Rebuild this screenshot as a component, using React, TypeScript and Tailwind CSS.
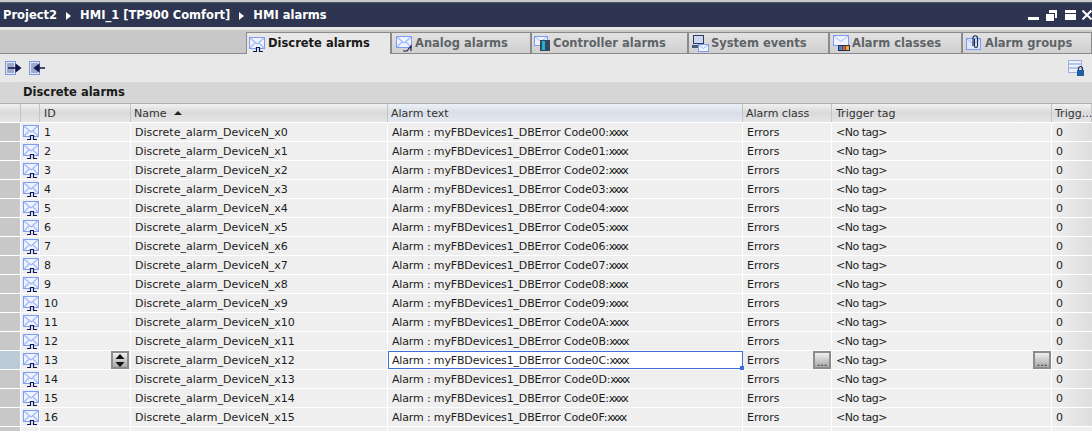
const hex = "0123456789ABCDEF";

const rows = Array.from({ length: 16 }, (_, i) => ({
  id: i + 1,
  name: `Discrete_alarm_DeviceN_x${i}`,
  text: `Alarm : myFBDevices1_DBError Code0${hex[i]}:`,
}));

const Envelope = ({ mark }: { mark?: "pulse" | "ramp" }) => (
  <svg width="17" height="18" viewBox="0 -2 17 18" className="shrink-0">
    <rect x="0.5" y="0.5" width="15" height="11" fill="#eef3ff" stroke="#7b9bf5" />
    <path d="M1 1l7 6 7-6M1 11l5-5M15 11l-5-5" fill="none" stroke="#a3b9f8" strokeWidth="1.300" />
    {mark === "ramp" ? (
      <path d="M7 15h4l4-5v5" fill="none" stroke="#1a1f50" strokeWidth="1.200" />
    ) : (
      <path d="M4 14.500h3.500v-4h3v4H14" fill="#eef3ff" stroke="#10184f" strokeWidth="1.200" />
    )}
  </svg>
);

const ControllerIcon = () => (
  <svg width="17" height="16" viewBox="0 0 17 16" className="shrink-0">
    <rect x="0.5" y="1.5" width="13" height="9" fill="#eef3ff" stroke="#7b9bf5" />
    <path d="M1 2l6 4.500L13 2" fill="none" stroke="#a3b9f8" />
    <rect x="6" y="5" width="10" height="11" fill="#3a4660" />
    <rect x="8" y="6" width="3" height="9" fill="#1fb5c8" />
  </svg>
);

const SystemIcon = () => (
  <svg width="17" height="17" viewBox="0 0 17 17" className="shrink-0">
    <rect x="1.5" y="0.5" width="10" height="8" fill="#cfd8f0" stroke="#2e3a60" />
    <rect x="0" y="10" width="7" height="3" fill="#4a5878" />
    <rect x="6.5" y="9.5" width="10" height="7" fill="#eef3ff" stroke="#7b9bf5" />
    <path d="M7 10l4.500 3.500L16 10" fill="none" stroke="#a3b9f8" />
  </svg>
);

const ClassIcon = () => (
  <svg width="17" height="16" viewBox="0 0 17 16" className="shrink-0">
    <rect x="0.5" y="0.5" width="15" height="10" fill="#eef3ff" stroke="#7b9bf5" />
    <path d="M1 1l7 5.500L15 1" fill="none" stroke="#a3b9f8" />
    <rect x="5" y="10" width="12" height="6" fill="#27304f" />
    <rect x="6" y="11" width="3" height="4" fill="#3f7fe0" />
    <rect x="9.500" y="11" width="3" height="4" fill="#e05a3a" />
    <rect x="13" y="11" width="3" height="4" fill="#e8b030" />
  </svg>
);

const GroupIcon = () => (
  <svg width="17" height="16" viewBox="0 0 17 16" className="shrink-0">
    <rect x="0.5" y="3.500" width="14" height="11" fill="#dfe7fb" stroke="#7b9bf5" />
    <path d="M1 4l6.500 5L14 4" fill="none" stroke="#a3b9f8" />
    <path d="M7 11V3a2.200 2.200 0 0 1 4.500 0v8a1.500 1.500 0 0 1-3 0V4" fill="none" stroke="#1c2450" strokeWidth="1.100" />
  </svg>
);

const tabs = [
  { label: "Discrete alarms", icon: <Envelope />, w: "w-[145px] pl-[2px]", active: true },
  { label: "Analog alarms", icon: <Envelope mark="ramp" />, w: "w-[140px] pl-[4px]" },
  { label: "Controller alarms", icon: <ControllerIcon />, w: "w-[157px] pl-[2px]" },
  { label: "System events", icon: <SystemIcon />, w: "w-[141px] pl-[3px]" },
  { label: "Alarm classes", icon: <ClassIcon />, w: "w-[133px] pl-[3px]" },
  { label: "Alarm groups", icon: <GroupIcon />, w: "w-[130px] pl-[3px]" },
];

const DocArrow = ({ flip }: { flip?: boolean }) => (
  <svg width="17" height="15" viewBox="0 0 17 15">
    <rect x="0.500" y="0.500" width="10" height="13" fill="#dfe7fb" stroke="#7f97d8" />
    <path d="M2 3h7M2 5h7M2 7h7M2 9h7M2 11h7" stroke="#5a6a90" />
    {flip ? (
      <path d="M16 7H8M10 3.500L5.500 7 10 10.500z" fill="#10184f" stroke="#10184f" strokeWidth="1.300" />
    ) : (
      <path d="M3 7h8M11 3.500L15.500 7 11 10.500z" fill="#10184f" stroke="#10184f" strokeWidth="1.300" />
    )}
  </svg>
);

const LockIcon = () => (
  <svg width="16" height="16" viewBox="0 0 16 16">
    <rect x="0.500" y="0.500" width="13" height="12" fill="#eef2fc" stroke="#9aaee0" />
    <path d="M1 4h12M1 8h12" stroke="#7f97d8" />
    <rect x="9" y="10" width="7" height="6" fill="#1f5fa8" />
    <path d="M10.500 10V8.500a2 2 0 0 1 4 0V10" fill="none" stroke="#27304f" strokeWidth="1.200" />
  </svg>
);

const WindowButtons = () => (
  <div className="flex items-center">
    <span className="mt-[7px] h-[3px] w-[11px] bg-white" />
    <svg width="11" height="11" viewBox="0 0 11 11" className="ml-[7px]">
      <path d="M3 0h8v8H9V3H3z M0 4h8v7H0z" fill="#fff" />
    </svg>
    <svg width="11" height="10" viewBox="0 0 11 10" className="ml-[8px]">
      <path d="M0 0h11v3H0z M0 4h11v6H0z" fill="#fff" />
    </svg>
    <svg width="10" height="10" viewBox="0 0 10 10" className="ml-[6px]">
      <path d="M0.500 0.500l9 9M9.500 0.500l-9 9" stroke="#fff" strokeWidth="2" />
    </svg>
  </div>
);

const gridCols = "grid grid-cols-[21px_19px_91px_257px_355px_89px_220px_40px]";
const headCell = "flex items-center border-r border-[#c4c4c4] bg-gradient-to-b from-[#f1f1f1] via-[#d9d9d9] to-[#e6e6e6]";
const cell = "flex min-w-0 items-center border-r border-white pl-1";

const ExpandButton = ({ children }: { children: React.ReactNode }) => (
  <span className="ml-auto flex h-[18px] w-[18px] shrink-0 items-center justify-center border-2 border-[#8c8c8c] bg-gradient-to-b from-[#f0f0f0] to-[#a8a8a8]">
    {children}
  </span>
);

const Dots = () => <span className="pt-[5px]">...</span>;

const AlarmText = ({ text }: { text: string }) => (
  <span className="tracking-[-0.15px]">
    {text}
    <span className="tracking-[-2px]">xxxx</span>
  </span>
);

const App = () => {
  return (
    <div className="h-[431px] w-[1092px] overflow-hidden bg-white font-['DejaVu_Sans',sans-serif] text-[11px] leading-none text-[#1c1c1c]">
      <div className="h-[2px] bg-[#c8c8c8]" />
      <div className="flex h-[25px] items-center justify-between bg-[#2d3550] pl-[3px] text-[11.5px] font-bold text-white [border-top:1px_solid_#50586c]">
        <div className="mt-px flex items-center">
          <span>Project2</span>
          <span className="mx-[9px] border-y-[4px] border-l-[5px] border-y-transparent border-l-white" />
          <span>HMI_1 [TP900 Comfort]</span>
          <span className="mx-[9px] border-y-[4px] border-l-[5px] border-y-transparent border-l-white" />
          <span>HMI alarms</span>
        </div>
        <WindowButtons />
      </div>
      <div className="h-[3px] bg-[#e6e6e6]" />

      <div className="flex h-[24px] items-end justify-end border-b border-[#8a8a8a] bg-[#c8c8c8]">
        {tabs.map((t) => (
          <div
            key={t.label}
            className={`flex h-[21px] shrink-0 items-center gap-[2px] border border-b-0 border-[#8a8a8a] text-[11.5px] font-bold ${t.w} ${
              t.active
                ? "relative -mb-px h-[22px] bg-[#e8e8e8] text-[#1a1a1a]"
                : "bg-gradient-to-b from-[#e2e2e2] to-[#d0d0d0] text-[#5e6468]"
            }`}
          >
            {t.icon}
            <span className="pt-px">{t.label}</span>
          </div>
        ))}
      </div>

      <div className="flex h-[28px] items-center justify-between bg-[#e8e8e8] pl-[5px] pr-[8px]">
        <div className="flex items-center gap-[7px]">
          <DocArrow />
          <DocArrow flip />
        </div>
        <LockIcon />
      </div>

      <div className="flex h-[21px] items-center bg-[#d6d6d6] pl-[23px] text-[11.5px] font-bold text-[#1a1a1a]">
        Discrete alarms
      </div>

      <div className={`${gridCols} h-[19px] border-t border-[#b0b0b0] text-[#333]`}>
        <div className={headCell} />
        <div className={headCell} />
        <div className={`${headCell} pl-1`}>ID</div>
        <div className={`${headCell} gap-2 pl-[3px]`}>
          Name
          <span className="border-x-[4px] border-b-[4px] border-x-transparent border-b-[#222]" />
        </div>
        <div className="flex items-center border-r border-[#c4c4c4] bg-gradient-to-b from-[#edf0f5] via-[#d8dee8] to-[#e6eaf0] pl-[3px]">
          Alarm text
        </div>
        <div className={`${headCell} pl-[3px]`}>Alarm class</div>
        <div className={`${headCell} pl-1`}>Trigger tag</div>
        <div className={`${headCell} pl-[3px]`}>Trigg...</div>
      </div>

      <div className="bg-white">
        {rows.map((r) => {
          const sel = r.id === 13;
          return (
            <div key={r.id} className={`${gridCols} h-[19px] border-t border-white bg-[#efefef]`}>
              <div className={`border-r border-white ${sel ? "bg-[#bccad6]" : "bg-[#c8c8c8]"}`} />
              <div className="flex items-center border-r border-white pl-[2px]">
                <Envelope />
              </div>
              <div className={`${cell} pr-px`}>
                {r.id}
                {sel && (
                  <ExpandButton>
                    <svg width="10" height="13" viewBox="0 0 10 13">
                      <path d="M5 0l4.500 5h-9zM5 13L.5 8h9z" fill="#111" />
                    </svg>
                  </ExpandButton>
                )}
              </div>
              <div className={cell}>{r.name}</div>
              {sel ? (
                <div className="relative flex items-center border border-[#3c6fd8] bg-white pl-[3px]">
                  <AlarmText text={r.text} />
                  <span className="absolute -right-[2px] -bottom-[2px] h-[4px] w-[4px] bg-[#3c6fd8]" />
                </div>
              ) : (
                <div className={cell}>
                  <AlarmText text={r.text} />
                </div>
              )}
              <div className={cell}>
                Errors
                {sel && (
                  <ExpandButton>
                    <Dots />
                  </ExpandButton>
                )}
              </div>
              <div className={cell}>
                <span className="tracking-[-0.5px]">{"<No tag>"}</span>
                {sel && (
                  <ExpandButton>
                    <Dots />
                  </ExpandButton>
                )}
              </div>
              <div className="flex items-center bg-gradient-to-r from-[#efefef] to-[#dedede] pl-1">0</div>
            </div>
          );
        })}
        <div className={`${gridCols} h-[19px] border-t border-white bg-[#efefef]`}>
          <div className="border-r border-white bg-[#c8c8c8]" />
          <div className="border-r border-white" />
          <div className="border-r border-white" />
          <div className="border-r border-white" />
          <div className="border-r border-white" />
          <div className="border-r border-white" />
          <div className="border-r border-white" />
          <div />
        </div>
      </div>
    </div>
  );
};

export default App;
